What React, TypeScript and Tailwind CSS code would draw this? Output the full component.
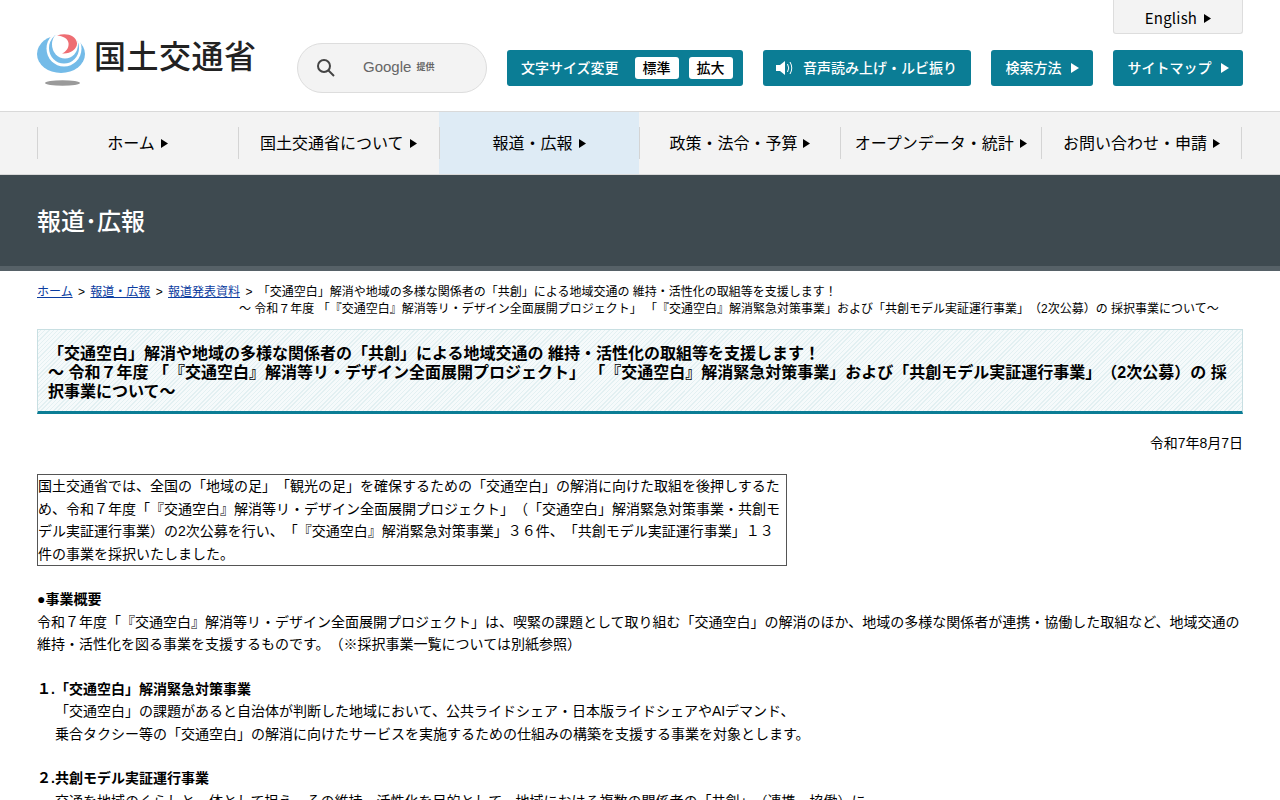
const font = "font-['Liberation_Sans','Noto_Sans_CJK_JP',sans-serif]"

const Arrow = ({ className = "" }: { className?: string }) => (
  <svg width="7" height="9" viewBox="0 0 7 9" preserveAspectRatio="none" className={className}>
    <path d="M0 0 L7 4.5 L0 9 Z" fill="currentColor" />
  </svg>
)

const Logo = () => (
  <svg width="48" height="52" viewBox="0 0 48 52" className="shrink-0">
    <ellipse cx="24" cy="20" rx="24" ry="19" fill="#74bbe8" />
    <ellipse cx="27" cy="14.5" rx="17.5" ry="18" fill="#fff" />
    <ellipse cx="27" cy="14" rx="15" ry="15.5" fill="#74bbe8" />
    <ellipse cx="28" cy="10.5" rx="13" ry="14" fill="#fff" />
    <path d="M20 1.5 C29 -1.5 39 1 40 9 C40.5 15 33 20.5 25 19.5 C30 17 32 13 31.5 9 C31 4.5 26 2 20 1.5 Z" fill="#ee6e73" />
    <ellipse cx="25.5" cy="49" rx="17.5" ry="2.8" fill="#9a9a9a" />
  </svg>
)

const TealButton = ({ children, className = "" }: { children: React.ReactNode; className?: string }) => (
  <div className={`flex h-9 items-center rounded-[3px] bg-[#0b7d95] text-[14px] font-medium text-white ${className}`}>
    {children}
  </div>
)

const Sep = () => <span className="mx-[2px]"> &gt; </span>

const navItems = ["ホーム", "国土交通省について", "報道・広報", "政策・法令・予算", "オープンデータ・統計", "お問い合わせ・申請"]

export default function App() {
  return (
    <div className={`min-h-screen bg-white text-black [text-spacing-trim:space-all] ${font}`}>
      <header className="relative mx-auto h-[111px] w-[1206px]">
        <div className="flex h-full items-center pt-[25px]">
          <div className="-mt-[16px] flex w-[260px] items-center gap-[9px]">
            <Logo />
            <span className="-mt-[6px] text-[32px] font-medium leading-none tracking-[0.5px] text-[#222]">国土交通省</span>
          </div>
          <div className="flex h-[50px] w-[190px] items-center rounded-full border border-[#ddd] bg-[#f3f3f3] pl-[18px]">
            <svg width="20" height="20" viewBox="0 0 20 20" fill="none" stroke="#444" strokeWidth="2">
              <circle cx="8" cy="8" r="6" />
              <path d="M12.5 12.5 L18 18" />
            </svg>
            <span className="-mt-[1px] ml-[27px] text-[15px] text-[#666]">Google</span>
            <span className="ml-[5px] text-[9px] font-bold text-[#666]">提供</span>
          </div>
          <div className="ml-5 flex items-center gap-5">
            <TealButton className="w-[236px] pl-[14px]">
              <span>文字サイズ変更</span>
              <span className="ml-[16px] flex h-[22px] w-[44px] items-center justify-center rounded-[3px] bg-white text-black">標準</span>
              <span className="ml-[10px] flex h-[22px] w-[44px] items-center justify-center rounded-[3px] bg-white text-black">拡大</span>
            </TealButton>
            <TealButton className="w-[208px] pl-[13px]">
              <svg width="18" height="16" viewBox="0 0 18 16" className="mr-[9px]">
                <path d="M0 5 H4 L9 1 V15 L4 11 H0 Z" fill="#fff" />
                <path d="M11.5 4 Q14 8 11.5 12" stroke="#fff" fill="none" />
                <path d="M14 2 Q17.5 8 14 14" stroke="#fff" fill="none" />
              </svg>
              音声読み上げ・ルビ振り
            </TealButton>
            <TealButton className="w-[102px] justify-center gap-[9px]">検索方法<Arrow className="h-[10px] w-2" /></TealButton>
            <TealButton className="w-[130px] justify-center gap-[9px]">サイトマップ<Arrow className="h-[10px] w-2" /></TealButton>
          </div>
        </div>
        <div className="absolute right-0 top-0 flex h-[34px] w-[130px] items-center justify-center gap-[7px] rounded-b-[3px] border border-t-0 border-[#ddd] bg-[#f3f3f3] pt-[3px] font-['Noto_Sans_CJK_JP',sans-serif] text-[15px] tracking-[0.2px]">
          English<Arrow />
        </div>
      </header>

      <nav className="border-y border-[#d9d9d9] bg-[#f3f3f3]">
        <ul className="mx-auto flex h-[62px] w-[1206px] items-center pr-px">
          {navItems.map((item, i) => (
            <li key={item} className={`relative flex h-full flex-1 items-center justify-center pt-px ${i === 2 ? "bg-[#deebf5]" : ""}`}>
              <span className="absolute bottom-[15px] left-0 top-[15px] w-px bg-[#d4d4d4]" />
              {i === 5 && <span className="absolute bottom-[15px] right-0 top-[15px] w-px bg-[#d4d4d4]" />}
              <span className="text-[16px]">{item}</span>
              <Arrow className="ml-[6px]" />
            </li>
          ))}
        </ul>
      </nav>

      <div className="border-b-[5px] border-[#566167] bg-[#3e4a50]">
        <h1 className="mx-auto flex h-[91px] w-[1206px] items-center pt-[2px] text-[24px] font-medium text-white">報道･広報</h1>
      </div>

      <main className="mx-auto w-[1206px]">
        <div className="pt-[13px] text-[12px] leading-[17px]">
          <p>
            <a className="text-[#0b3ca0] underline">ホーム</a><Sep /><a className="text-[#0b3ca0] underline">報道・広報</a><Sep /><a className="text-[#0b3ca0] underline">報道発表資料</a><Sep />「交通空白」解消や地域の多様な関係者の「共創」による地域交通の 維持・活性化の取組等を支援します！
          </p>
          <p className="pl-[202px]">～ 令和７年度 「『交通空白』解消等リ・デザイン全面展開プロジェクト」 「『交通空白』解消緊急対策事業」および「共創モデル実証運行事業」（2次公募）の 採択事業について～</p>
        </div>

        <h2 className="mt-[11px] border border-b-[3px] border-[#c8dfe2] border-b-[#0b7d95] bg-[repeating-linear-gradient(-45deg,#e3f0f2_0,#e3f0f2_1px,#f6fafb_1px,#f6fafb_3px)] px-[10px] pb-[10px] pt-[14px] text-[16px] font-bold leading-[19px]">
          「交通空白」解消や地域の多様な関係者の「共創」による地域交通の 維持・活性化の取組等を支援します！<br />
          ～ 令和７年度 「『交通空白』解消等リ・デザイン全面展開プロジェクト」 「『交通空白』解消緊急対策事業」および「共創モデル実証運行事業」（2次公募）の 採択事業について～
        </h2>

        <p className="mt-[19px] text-right text-[14px] leading-[20px]">令和7年8月7日</p>

        <div className="mt-[21.3px] w-[750px] border border-[#555] text-[14px] leading-[22.4px]">
          国土交通省では、全国の「地域の足」「観光の足」を確保するための「交通空白」の解消に向けた取組を後押しするため、令和７年度「『交通空白』解消等リ・デザイン全面展開プロジェクト」（「交通空白」解消緊急対策事業・共創モデル実証運行事業）の2次公募を行い、「『交通空白』解消緊急対策事業」３６件、「共創モデル実証運行事業」１３件の事業を採択いたしました。
        </div>

        <div className="mt-[22.3px] text-[14px] leading-[22.4px]">
          <p className="font-bold">●事業概要</p>
          <p>令和７年度「『交通空白』解消等リ・デザイン全面展開プロジェクト」は、喫緊の課題として取り組む「交通空白」の解消のほか、地域の多様な関係者が連携・協働した取組など、地域交通の維持・活性化を図る事業を支援するものです。（※採択事業一覧については別紙参照）</p>
          <br />
          <p className="font-bold">１.「交通空白」解消緊急対策事業</p>
          <p className="pl-[18px]">「交通空白」の課題があると自治体が判断した地域において、公共ライドシェア・日本版ライドシェアやAIデマンド、</p>
          <p className="pl-[18px]">乗合タクシー等の「交通空白」の解消に向けたサービスを実施するための仕組みの構築を支援する事業を対象とします。</p>
          <br />
          <p className="font-bold">２.共創モデル実証運行事業</p>
          <p className="pl-[18px]">交通を地域のくらしと一体として捉え、その維持・活性化を目的として、地域における複数の関係者の「共創」（連携・協働）に</p>
        </div>
      </main>
    </div>
  )
}
